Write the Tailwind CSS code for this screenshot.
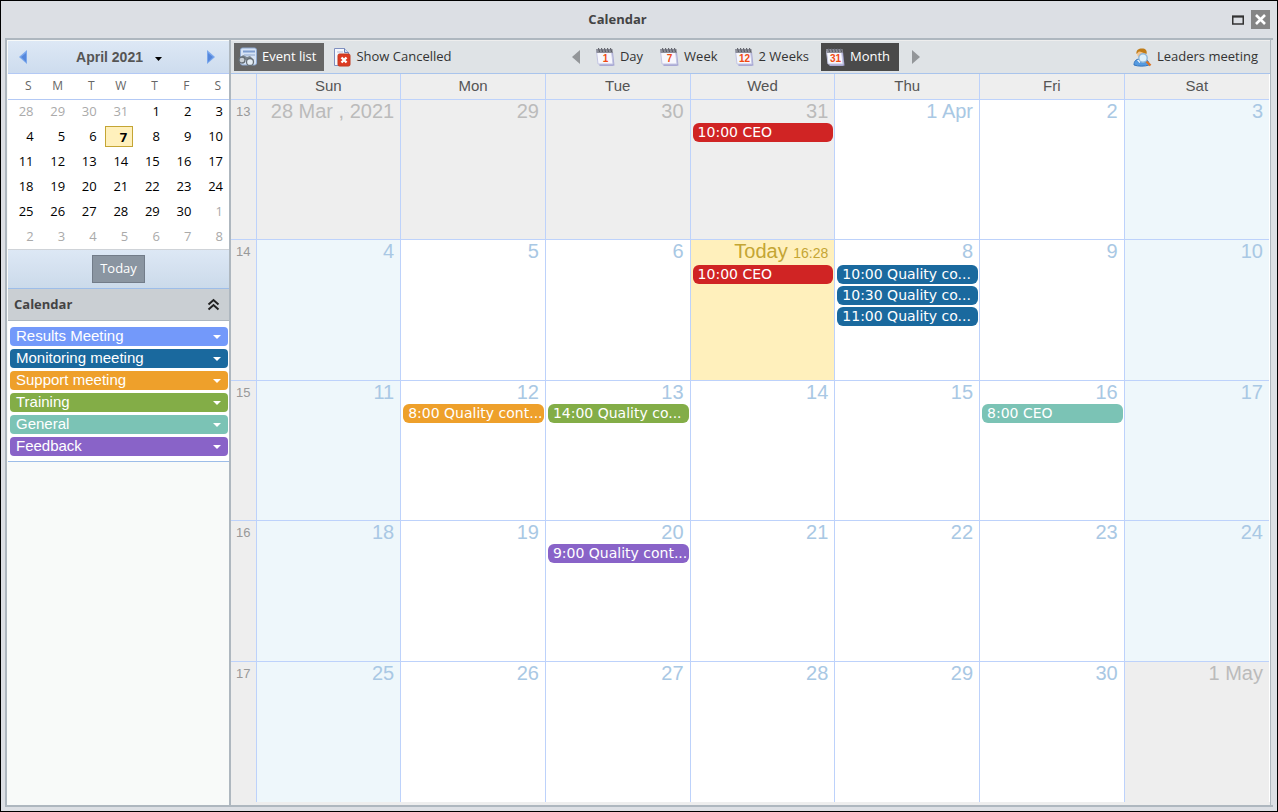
<!DOCTYPE html>
<html lang="en">
<head>
    <meta charset="UTF-8">
    <meta name="viewport" content="width=device-width, initial-scale=1.0">
    <title>Calendar</title>
    <script src="https://cdn.jsdelivr.net/npm/@tailwindcss/browser@4"></script>
</head>
<body class="h-screen min-h-[620px] flex flex-col border border-black bg-[#dcdfe4] px-1 pb-1 font-['Open_Sans','Noto_Sans',sans-serif] text-[13px] text-[#333]">
    <!-- Window header -->
    <header class="h-[37px] shrink-0 grid grid-cols-[1fr_auto_1fr] items-center pr-[3px]">
        <h1 class="col-start-2 pr-10 font-bold text-[#444]">Calendar</h1>
        <div class="flex items-center justify-end gap-[7px]">
            <button type="button" aria-label="Maximize">
                <svg class="block" width="12" height="10"><path d="M.75 1.5h10.5v7.5H.75z" fill="none" stroke="#333" stroke-width="1.5"/><path d="M0 1.5h12" stroke="#333" stroke-width="2"/></svg>
            </button>
            <button type="button" aria-label="Close" class="bg-[#858585]">
                <svg class="block" width="19" height="19"><path d="M5 5l9 9M14 5l-9 9" stroke="#fff" stroke-width="2.6"/></svg>
            </button>
        </div>
    </header>

    <div class="flex-1 min-h-0 flex border-2 border-[#aeb7bf] border-r-0">
        <!-- Sidebar -->
        <aside class="w-[224px] shrink-0 flex flex-col pl-px border-r-2 border-[#aeb7bf] bg-[#f8faf9]">
            <div class="h-[33px] mt-px flex items-center justify-between pl-[11px] pr-[14px] border-b border-[#b3c9f5] bg-linear-to-b from-[#dde8f5] to-[#cddcee]">
                <button type="button" aria-label="Previous month">
                    <svg class="block" width="8" height="14"><path d="M8 0v14L0 7z" fill="#7aa7ec"/><path d="M7 3v9L2 7z" fill="#5587dc"/></svg>
                </button>
                <button type="button" class="flex items-center gap-3 pl-1 font-['Liberation_Sans',sans-serif] text-sm leading-4 font-bold text-[#555]">
                    April 2021
                    <svg class="mt-1" width="7" height="4"><path d="M0 0h7L3.500 4z" fill="#000"/></svg>
                </button>
                <button type="button" aria-label="Next month">
                    <svg class="block" width="8" height="14"><path d="M0 0v14l8-7z" fill="#7aa7ec"/><path d="M1 3v9l5-5z" fill="#5587dc"/></svg>
                </button>
            </div>
            <table class="w-full table-fixed bg-white text-right text-black">
                <thead>
                    <tr class="h-[25px] border-b border-[#b3c9f5] text-xs text-[#666]">
                        <th class="pr-2 font-normal">S</th>
                        <th class="pr-2 font-normal">M</th>
                        <th class="pr-2 font-normal">T</th>
                        <th class="pr-2 font-normal">W</th>
                        <th class="pr-2 font-normal">T</th>
                        <th class="pr-2 font-normal">F</th>
                        <th class="pr-2 font-normal">S</th>
                    </tr>
                </thead>
                <tbody id="mini"></tbody>
            </table>
            <div class="h-10 flex items-center justify-center border-t border-b border-t-[#cfd3d8] border-b-[#9dbde8] bg-linear-to-b from-[#dde8f5] to-[#cbdaea]">
                <button type="button" class="h-7 w-[53px] border border-[#727c89] bg-[#8a95a1] text-white">Today</button>
            </div>
            <div class="h-8 flex items-center justify-between pl-[6px] pr-[9px] border-b border-[#aeb7bf] bg-[#cacfd3]">
                <h2 class="font-bold text-[#444]">Calendar</h2>
                <button type="button" aria-label="Collapse">
                    <svg class="block" width="13" height="13"><path d="M1.500 6.500l5-4.500 5 4.500M1.500 11.500l5-4.500 5 4.500" fill="none" stroke="#222" stroke-width="2"/></svg>
                </button>
            </div>
            <ul id="types" class="flex flex-col gap-[3px] pt-[6px] pb-[5px] pl-[2px] pr-px border-b border-[#9dbde8] bg-white font-['Liberation_Sans',sans-serif] text-[15px]"></ul>
        </aside>

        <!-- Main area -->
        <main class="flex-1 min-w-0 flex flex-col mr-[2px] border-r border-[#aeb7bf] bg-[#eee]">
            <div class="h-[33px] mt-px shrink-0 grid grid-cols-[1fr_auto_1fr] items-center pl-[3px] pr-3 border-b border-[#a9c4ec] bg-[#dfe3e6]">
                <div class="flex gap-1">
                    <button type="button" class="h-7 flex items-center gap-1 pl-1 pr-2 bg-[#666] text-white">
                        <svg width="20" height="20"><rect x="2.500" y="1" width="16" height="17" rx="2" fill="#d6e3f5" stroke="#8fa9d0"/><path d="M5 4.500h12" stroke="#7f9ed0" stroke-width="2"/><path d="M6 8h11" stroke="#8ea6cc"/><path d="M2 11l3-3 4 2 3-1 4 4-3 2-5-2z" fill="#7c868e"/><circle cx="4" cy="13" r="3" fill="#c9d0d6" stroke="#666f77" stroke-width="1.300"/><circle cx="12" cy="15" r="3.500" fill="#e4edf4" stroke="#666f77" stroke-width="1.300"/></svg>
                        Event list
                    </button>
                    <button type="button" class="h-7 flex items-center gap-1 pl-[5px] pr-2">
                        <svg width="19" height="19"><path d="M1.500.5h10l4 4v13h-14z" fill="#f6f8fd" stroke="#8090c0"/><path d="M11.500.5v4h4" fill="#d5def2" stroke="#6c7fb4"/><path d="M4 4h6" stroke="#b5bfdc"/><rect x="5" y="6" width="12" height="12" rx="1.500" fill="#dd3a22" stroke="#c0391f"/><path d="M8.500 9.500l5 5M13.500 9.500l-5 5" stroke="#fff" stroke-width="2.400"/></svg>
                        Show Cancelled
                    </button>
                </div>
                <div id="views" class="flex items-center gap-[3px]">
                    <button type="button" aria-label="Previous" class="pr-2">
                        <svg class="block" width="8" height="14"><path d="M8 0v14L0 7z" fill="#939699"/></svg>
                    </button>
                    <button type="button" aria-label="Next" class="pl-[10px]">
                        <svg class="block" width="8" height="14"><path d="M0 0v14l8-7z" fill="#939699"/></svg>
                    </button>
                </div>
                <button type="button" class="justify-self-end flex items-center gap-[5px]">
                    <svg width="19" height="19"><path d="M1 17c0-4 2-6 6-6h3c4 0 6 2 6 6-4 1.500-11 1.500-15 0z" fill="#559ae0" stroke="#3474bd"/><path d="M4 12l2.500 3 2.500-3z" fill="#fff"/><circle cx="8.500" cy="6" r="4.300" fill="#f5c48c"/><path d="M3.500 6C3 2 5.500.5 9 .5s5.500 2 4.500 5.500C11 5 8 3.500 6 3.500 5 4 5 5 3.500 6z" fill="#c07c18"/><circle cx="10" cy="10" r="4.200" fill="#dcf0fc" stroke="#8fb6d8" stroke-width="1.400"/><path d="M13.500 13.500l4 4" stroke="#dc7424" stroke-width="2.400"/></svg>
                    Leaders meeting
                </button>
            </div>

            <!-- Month grid -->
            <div class="flex-1 min-h-0 border-r border-white mb-[3px]">
                <table class="w-full h-full table-fixed font-['Liberation_Sans',sans-serif]">
                    <thead>
                        <tr class="h-[25px] text-[15px] leading-5 text-[#555] border-b border-[#bdd2fb]">
                            <td class="w-[25px]"></td>
                            <th class="font-normal border-l border-[#bdd2fb]">Sun</th>
                            <th class="font-normal border-l border-[#bdd2fb]">Mon</th>
                            <th class="font-normal border-l border-[#bdd2fb]">Tue</th>
                            <th class="font-normal border-l border-[#bdd2fb]">Wed</th>
                            <th class="font-normal border-l border-[#bdd2fb]">Thu</th>
                            <th class="font-normal border-l border-[#bdd2fb]">Fri</th>
                            <th class="font-normal border-l border-[#bdd2fb]">Sat</th>
                        </tr>
                    </thead>
                    <tbody id="month"></tbody>
                </table>
            </div>
        </main>
    </div>

    <script>
        // Small month in the sidebar, starting on Sunday 28 March
        const mini = document.getElementById('mini');
        for (let w = 0; w < 6; w++) {
            let row = '<tr class="h-[25px]">';
            for (let d = 0; d < 7; d++) {
                const date = new Date(2021, 2, 28 + w * 7 + d);
                const day = date.getDate();
                if (date.getMonth() !== 3) {
                    row += `<td class="p-0 pr-[6px] text-[#aaa]">${day}</td>`;
                } else if (day === 7) {
                    row += `<td class="p-0 pl-[2px] pr-px"><div class="h-[21px] pr-[5px] border border-[#c4a534] bg-[#fff0bc] leading-5 font-bold">${day}</div></td>`;
                } else {
                    row += `<td class="p-0 pr-[6px]">${day}</td>`;
                }
            }
            mini.innerHTML += row + '</tr>';
        }

        // Meeting types
        const types = [
            ['Results Meeting', 'bg-[#7399fa]'],
            ['Monitoring meeting', 'bg-[#1a699e]'],
            ['Support meeting', 'bg-[#eea02b]'],
            ['Training', 'bg-[#83ad47]'],
            ['General', 'bg-[#7bc3b5]'],
            ['Feedback', 'bg-[#8963c8]'],
        ];
        document.getElementById('types').innerHTML = types.map(([name, color]) => `
            <li><button type="button" class="w-full h-[19px] flex items-center justify-between pl-[6px] pr-[7px] rounded text-white ${color}">${name}
                <svg width="8" height="4"><path d="M0 0h8L4 4z" fill="#fff"/></svg>
            </button></li>`).join('');

        // View switcher
        const views = [['Day', '1'], ['Week', '7'], ['2 Weeks', '12'], ['Month', '31']];
        document.querySelector('#views button').insertAdjacentHTML('afterend', views.map(([name, num]) => `
            <button type="button" class="h-7 flex items-center gap-[5px] pl-[5px] pr-[9px] ${name === 'Month' ? 'bg-[#4a4a4a] text-white' : ''}">
                <svg width="19" height="19">
                    <path d="M2 4h15l1.500 13.500-2 .5H3.500z" fill="#a9a9d4"/>
                    <path d="M.5 3h15l1.500 13H2z" fill="#f7f7fd" stroke="#c3c5e2"/>
                    <path d="M0 1h16.500l.5 4H.5z" fill="#8d8f9a"/>
                    <path d="M2.500 0l1 4M5.500 0l1 4M8.500 0l1 4M11.500 0l1 4M14.500 0l1 4" stroke="#55575f"/>
                    <text x="9.500" y="14" text-anchor="middle" font-family="Liberation Sans, sans-serif" font-size="10" font-weight="bold" fill="#f04a12">${num}</text>
                </svg>${name}
            </button>`).join(''));

        // Month events by date
        const events = {
            '3-31': [['10:00 CEO', 'bg-[#d02424]']],
            '4-7': [['10:00 CEO', 'bg-[#d02424]']],
            '4-8': [['10:00 Quality co...', 'bg-[#1a699e]'], ['10:30 Quality co...', 'bg-[#1a699e]'], ['11:00 Quality co...', 'bg-[#1a699e]']],
            '4-12': [['8:00 Quality cont...', 'bg-[#eea02b]']],
            '4-13': [['14:00 Quality co...', 'bg-[#83ad47]']],
            '4-16': [['8:00 CEO', 'bg-[#7bc3b5]']],
            '4-20': [['9:00 Quality cont...', 'bg-[#8963c8]']],
        };
        const labels = { '3-28': '28 Mar , 2021', '4-1': '1 Apr', '5-1': '1 May', '4-7': 'Today <span class="text-sm leading-4">16:28</span>' };
        const month = document.getElementById('month');
        for (let w = 0; w < 5; w++) {
            let row = `<tr class="h-1/5 align-top ${w ? 'border-t border-[#bdd2fb]' : ''}"><th class="p-0 pt-[2px] text-[13px] leading-5 font-normal text-[#999]">${13 + w}</th>`;
            for (let d = 0; d < 7; d++) {
                const date = new Date(2021, 2, 28 + w * 7 + d);
                const key = (date.getMonth() + 1) + '-' + date.getDate();
                let look = 'bg-white text-[#a9c8e4]';
                if (date.getMonth() !== 3) look = 'bg-[#eee] text-[#bbb]';
                else if (key === '4-7') look = 'bg-[#fff0bc] text-[#c4a534]';
                else if (d === 0 || d === 6) look = 'bg-[#eef7fb] text-[#a9c8e4]';
                const list = (events[key] || []).map(([text, color]) =>
                    `<button type="button" class="w-full h-[19px] px-[5px] rounded-md overflow-hidden whitespace-nowrap text-left text-sm leading-[19px] text-white font-['DejaVu_Sans',sans-serif] ${color}">${text}</button>`).join('');
                row += `<td class="p-0 border-l border-[#bdd2fb] ${look}">
                    <div class="${w === 1 ? 'h-[25px]' : 'h-[23px]'} pr-[6px] text-right text-xl leading-[23px]">${labels[key] || date.getDate()}</div>
                    <div class="flex flex-col gap-[2px] pl-[2px] pr-px">${list}</div></td>`;
            }
            month.innerHTML += row + '</tr>';
        }
    </script>
</body>
</html>
